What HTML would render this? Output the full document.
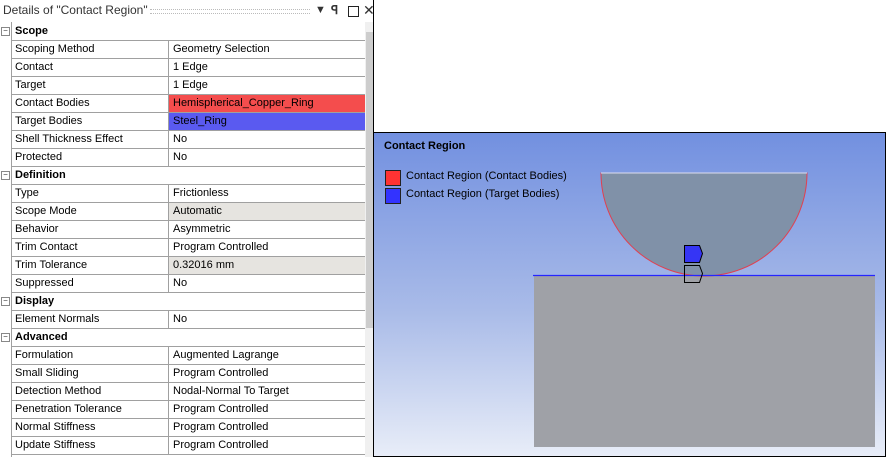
<!DOCTYPE html>
<html><head><style>
body{margin:0;width:886px;height:457px;position:relative;background:#fff;font-family:"Liberation Sans",sans-serif;font-size:11px;overflow:hidden;color:#000}
.r{position:absolute;left:11px;width:354px;height:17px;border-bottom:1px solid #a0a0a0;line-height:17px}
.n{position:absolute;left:4px;top:0}
.v{position:absolute;left:157px;top:0;width:197px;height:17px;border-left:1px solid #a0a0a0;padding-left:4px;box-sizing:border-box}
.h{font-weight:bold}
.m{position:absolute;left:1px;width:7px;height:7px;border:1px solid #888;font-size:8px;line-height:6px;text-align:center;color:#333}
</style></head><body>
<div style="position:absolute;left:0;top:0;width:373px;height:21px;line-height:21px;font-size:12px;color:#333;padding-left:3px">Details of "Contact Region"
<span style="position:absolute;left:150px;top:9px;width:160px;height:3px;border-top:1px dotted #bbb;border-bottom:1px dotted #bbb"></span>
<span style="position:absolute;left:315px;top:0;font-size:11px">▼</span>
<span style="position:absolute;left:331px;top:0;font-weight:bold">ꟼ</span>
<span style="position:absolute;left:348px;top:6px;width:9px;height:9px;border:1.5px solid #222"></span>
<span style="position:absolute;left:363px;top:0;font-size:14px">✕</span></div>
<div style="position:absolute;left:11px;top:22px;width:0;height:435px;border-left:1px solid #a0a0a0"></div>
<div style="position:absolute;left:365px;top:22px;width:8px;height:435px;background:#f0f0f0"></div>
<div style="position:absolute;left:366px;top:32px;width:7px;height:296px;background:#cdcdcd"></div>
<div style="position:absolute;left:373px;top:0;width:1px;height:457px;background:#000"></div>
<div id="t"></div>
<script>
var rows=[["Scope",null,1],["Scoping Method","Geometry Selection"],["Contact","1 Edge"],["Target","1 Edge"],["Contact Bodies","Hemispherical_Copper_Ring","#f44d4d"],["Target Bodies","Steel_Ring","#5a5af0"],["Shell Thickness Effect","No"],["Protected","No"],["Definition",null,1],["Type","Frictionless"],["Scope Mode","Automatic","#e6e4e0"],["Behavior","Asymmetric"],["Trim Contact","Program Controlled"],["Trim Tolerance","0.32016 mm","#e6e4e0"],["Suppressed","No"],["Display",null,1],["Element Normals","No"],["Advanced",null,1],["Formulation","Augmented Lagrange"],["Small Sliding","Program Controlled"],["Detection Method","Nodal-Normal To Target"],["Penetration Tolerance","Program Controlled"],["Normal Stiffness","Program Controlled"],["Update Stiffness","Program Controlled"]];
var h="";rows.forEach(function(r,i){var y=23+i*18;
if(r[2]===1){h+='<div class="m" style="top:'+(y+4)+'px">−</div><div class="r h" style="top:'+y+'px"><span class="n">'+r[0]+'</span></div>';}
else h+='<div class="r" style="top:'+y+'px"><span class="n">'+r[0]+'</span><span class="v" style="background:'+(r[2]||'transparent')+'">'+r[1]+'</span></div>';});
document.getElementById("t").innerHTML=h;
</script>
<div style="position:absolute;left:373px;top:132px;width:511px;height:323px;border:1px solid #000;background:linear-gradient(#7290e0,#a9bbe8 55%,#e8edf8);overflow:hidden">
<div style="position:absolute;left:10px;top:7px;font-weight:bold">Contact Region</div>
<div style="position:absolute;left:11px;top:37px;width:14px;height:14px;background:#f33;border:1px solid #222"></div>
<div style="position:absolute;left:32px;top:37px">Contact Region (Contact Bodies)</div>
<div style="position:absolute;left:11px;top:55px;width:14px;height:14px;background:#33f;border:1px solid #222"></div>
<div style="position:absolute;left:32px;top:55px">Contact Region (Target Bodies)</div>
<svg width="511" height="323" style="position:absolute;left:0;top:0">
<rect x="160" y="143" width="341" height="171" fill="#9fa1a7"/>
<path d="M227 40 A103 103 0 0 0 433 40 Z" fill="#8091a8" stroke="#e04050" stroke-width="1"/>
<line x1="227" y1="40" x2="433" y2="40" stroke="#dde" stroke-width="1"/>
<line x1="159" y1="142.5" x2="501" y2="142.5" stroke="#2525ff" stroke-width="1.2"/>
<path d="M310.5 112.5h15l3 8l-3 9h-15z" fill="#3535f5" stroke="#000"/>
<path d="M310.5 132.5h15l3 8l-3 9h-15z" fill="none" stroke="#000"/>
</svg></div>
</body></html>
